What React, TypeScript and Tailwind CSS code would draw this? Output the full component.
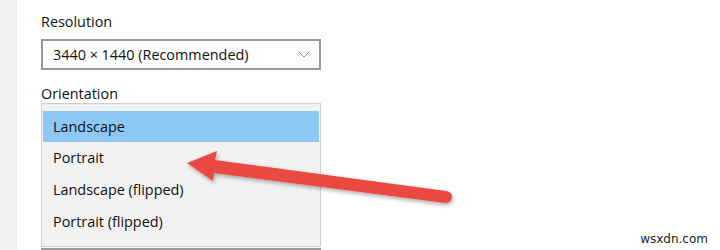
import React from 'react';

const options = ['Landscape', 'Portrait', 'Landscape (flipped)', 'Portrait (flipped)'];

const Arrow: React.FC = () => (
  <svg className="absolute left-0 top-0 pointer-events-none" width="720" height="250" viewBox="0 0 720 250">
    <defs>
      <filter id="sh" x="-10%" y="-30%" width="120%" height="160%">
        <feDropShadow dx="1" dy="2" stdDeviation="2" floodColor="#000" floodOpacity="0.35" />
      </filter>
    </defs>
    <path
      d="M187 163 L217 151 L215 160 L446 191 Q452 192 452 197 Q451 203 445 203 L214 173 L213 181 Z"
      fill="#ea4a43"
      filter="url(#sh)"
    />
  </svg>
);

const App: React.FC = () => {
  return (
    <div className="relative w-[720px] h-[250px] bg-white overflow-hidden flex font-['Open_Sans',sans-serif] text-[14.4px] text-[#111]">
      <div className="w-[17px] h-full bg-[#f2f2f2] border-r border-[#ececec]" />
      <div className="pl-[24px] pt-[10px] flex flex-col">
        <div className="h-[22px] leading-[24px]">Resolution</div>
        <div className="mt-[7px] w-[280px] h-[31px] border-2 border-[#999] flex items-center pl-[10px] pr-[9px] justify-between">
          <span>3440 × 1440 (Recommended)</span>
          <svg width="12" height="7" viewBox="0 0 12 7">
            <path d="M0.5 0.5 L6 6 L11.5 0.5" fill="none" stroke="#888" strokeWidth="1" />
          </svg>
        </div>
        <div className="mt-[11px] h-[22px] leading-[25px]">Orientation</div>
        <div className="w-[280px] h-[144px] border border-[#cfcfcf] bg-[#f2f2f2] pt-[7px] px-[1px]">
          {options.map((o, i) => (
            <div
              key={o}
              className={`flex items-center pl-[10px] ${i === 0 ? 'bg-[#8cc8f3] h-[31px]' : 'h-[32px]'}`}
            >
              {o}
            </div>
          ))}
        </div>
        <div className="mt-[1px] w-[280px] h-[2px] bg-[#999]" />
      </div>
      <div className="absolute right-[12px] bottom-[2px] font-['DejaVu_Sans',sans-serif] text-[12px] text-[#222]">wsxdn.com</div>
      <Arrow />
    </div>
  );
};

export default App;
